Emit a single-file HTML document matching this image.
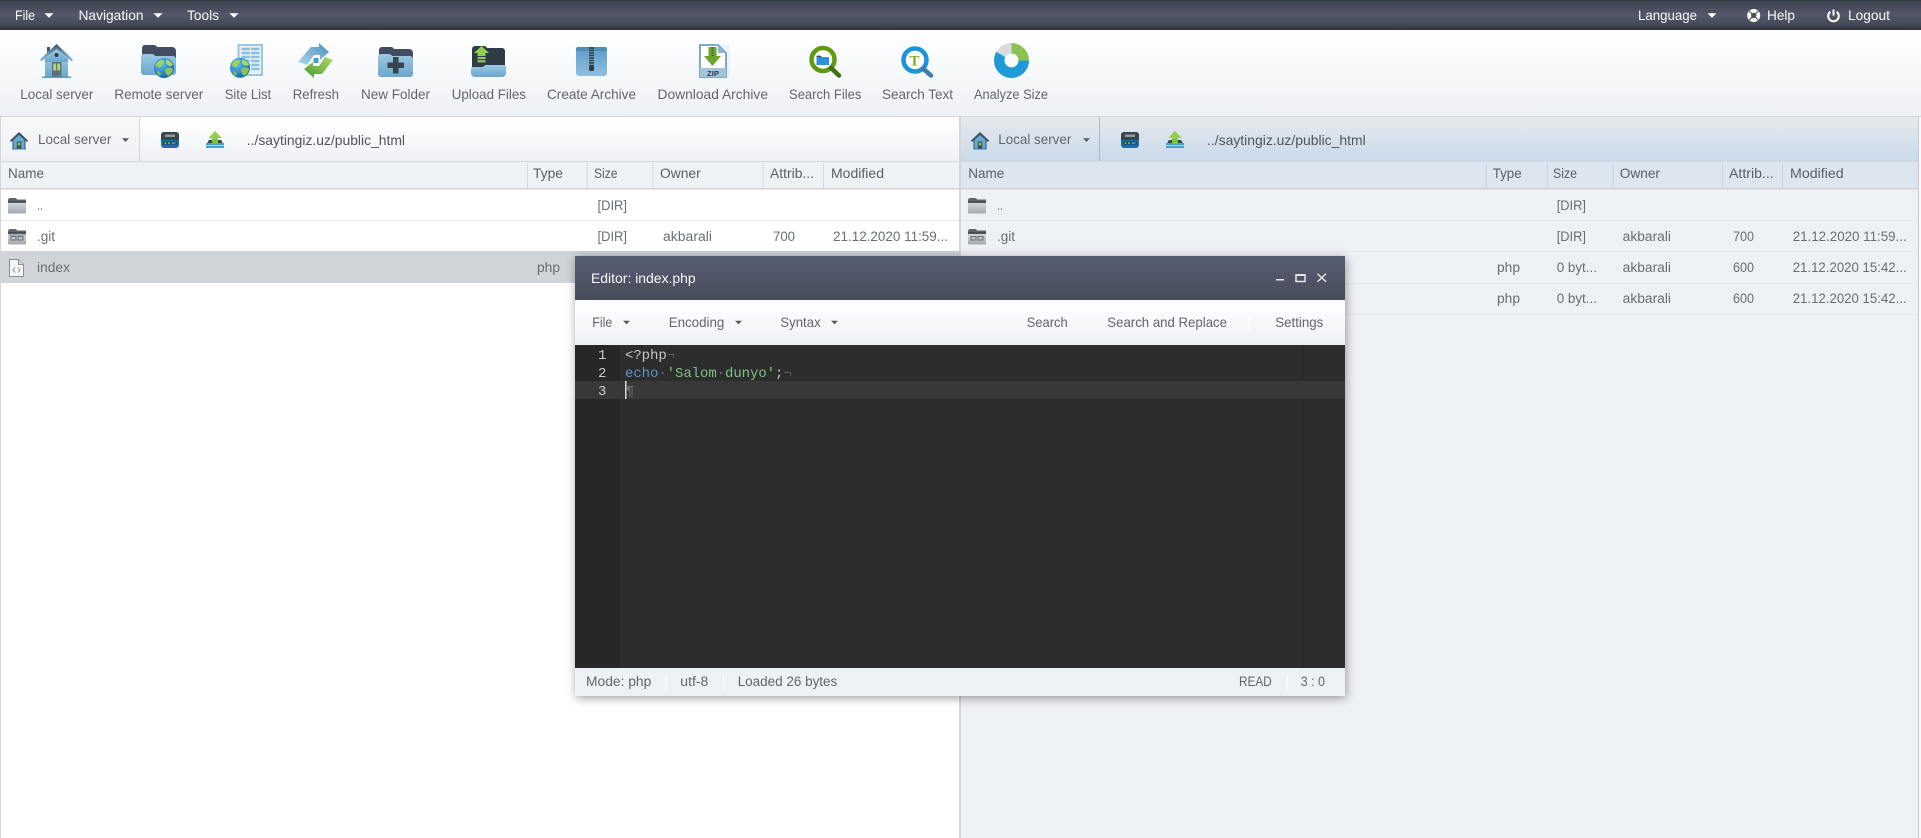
<!DOCTYPE html>
<html lang="en"><head><meta charset="utf-8"><title>File Manager</title>
<style>
html,body{margin:0;padding:0;background:#fff;width:1921px;height:838px;overflow:hidden}
svg{display:block}
text{font-family:"Liberation Sans",sans-serif;font-size:14px;fill:#62666c}
.w{fill:#f6f7f9}
.d{fill:#5a5f66}
.t{font-size:13.5px;fill:#6a6e74}
.p{fill:#50555b}
.s{font-size:13.5px}
.c{font-family:"Liberation Mono",monospace;font-size:14px;letter-spacing:-.07px}
</style></head><body>
<svg xmlns="http://www.w3.org/2000/svg" width="1921" height="838" viewBox="0 0 1921 838">
<defs>
<linearGradient id="top" x1="0" y1="0" x2="0" y2="1"><stop offset="0" stop-color="#3c404e"/><stop offset=".5" stop-color="#545969"/><stop offset=".8" stop-color="#464a58"/><stop offset="1" stop-color="#32343e"/></linearGradient>
<linearGradient id="tb" x1="0" y1="0" x2="0" y2="1"><stop offset="0" stop-color="#fff"/><stop offset="1" stop-color="#eef1f5"/></linearGradient>
<linearGradient id="dd" x1="0" y1="0" x2="0" y2="1"><stop offset="0" stop-color="#f7f8fa"/><stop offset="1" stop-color="#eef1f4"/></linearGradient>
<linearGradient id="rt" x1="0" y1="0" x2="0" y2="1"><stop offset="0" stop-color="#e6e9ed"/><stop offset="1" stop-color="#c8dae9"/></linearGradient>
<linearGradient id="ti" x1="0" y1="0" x2="0" y2="1"><stop offset="0" stop-color="#585f73"/><stop offset="1" stop-color="#474c5a"/></linearGradient>
<linearGradient id="bl" x1="0" y1="0" x2="0" y2="1"><stop offset="0" stop-color="#9cc8e2"/><stop offset="1" stop-color="#6aa6ce"/></linearGradient>
<linearGradient id="bl2" x1="0" y1="0" x2="0" y2="1"><stop offset="0" stop-color="#5b9bc8"/><stop offset="1" stop-color="#8fc0e2"/></linearGradient>
<linearGradient id="roof" x1="0" y1="0" x2="0" y2="1"><stop offset="0" stop-color="#3f4c60"/><stop offset=".45" stop-color="#5f8fae"/><stop offset="1" stop-color="#8cc0dd"/></linearGradient>
<linearGradient id="gf" x1="0" y1="0" x2="0" y2="1"><stop offset="0" stop-color="#d3d6da"/><stop offset="1" stop-color="#a4a8ad"/></linearGradient>
<linearGradient id="ra" x1="0" y1="1" x2="1" y2="0"><stop offset="0" stop-color="#b0d8ec"/><stop offset="1" stop-color="#4a8fc0"/></linearGradient>
<linearGradient id="ga" x1="1" y1="0" x2="0" y2="1"><stop offset="0" stop-color="#b4d86a"/><stop offset="1" stop-color="#459a30"/></linearGradient>
<radialGradient id="gl" cx=".35" cy=".3" r=".8"><stop offset="0" stop-color="#5cc0f5"/><stop offset="1" stop-color="#0a5cb0"/></radialGradient>
<filter id="sh" x="-5%" y="-5%" width="110%" height="110%"><feGaussianBlur stdDeviation="5"/></filter>

<g id="globe"><circle r="10" fill="url(#gl)"/>
<path d="M-8.5-3q3-5.5 7.5-5q2.500 2-.5 4q-1 3.500-3 3.500q-3-.5-4-2.500z" fill="#a0d455"/>
<path d="M2-8.500q5 1 7 5.500q-3 2-4.500.5q-3-1-2.500-6z" fill="#a8d85c"/>
<path d="M1 1q4-2 8-.5q-.5 5-4.500 7.500q-3.500-2-3.500-7z" fill="#8cc84e"/>
<path d="M-7 3q3 0 4 3q-1 2-2 2q-2-2-2-5z" fill="#80bc48"/></g>

<g id="house"><path d="M7 9V3h3v3z" fill="#4a5668"/>
<path d="M5 13H28V33H5z" fill="url(#bl)"/>
<path d="M16.500 0 33 15.500 31.500 17.500 16.500 5 1.500 17.500 0 15.500z" fill="url(#roof)"/>
<path d="M16.500 5 5 15V18H28V15z" fill="url(#bl)"/>
<circle cx="16.500" cy="11" r="2" fill="#2f3a48"/>
<rect x="12" y="18" width="9.500" height="15.500" fill="#646e78"/>
<rect x="13.300" y="19.500" width="2.800" height="7" fill="#b0d480"/><rect x="17.300" y="19.500" width="2.800" height="7" fill="#b0d480"/>
<rect x="2" y="32.500" width="29" height="1.500" fill="#5a9cc2"/></g>

<g id="hsm"><path d="M9 0 18 8.500 17 10 15.500 9V17H2.500V9L1 10 0 8.500z" fill="#3e5268"/>
<path d="M9 3 3.500 8V17H14.500V8z" fill="#66abd2"/>
<rect x="6.800" y="9.500" width="4.500" height="7.500" fill="#3e4a52"/><rect x="7.800" y="10.500" width="2.500" height="3" fill="#8cc84b"/>
<rect x="2" y="16.500" width="14" height="1" fill="#2d80ad"/></g>

<g id="drive"><rect x="0" y="0" width="18" height="16" rx="3" fill="#1f6ea8"/>
<path d="M0 8V3a3 3 0 0 1 3-3H15a3 3 0 0 1 3 3V8z" fill="#38444f"/>
<rect x="4" y="2.500" width="10" height="2.500" fill="#8f9aa3"/>
<rect x="2" y="9.500" width="14" height="3" fill="#153f5e"/>
<rect x="3.500" y="10.300" width="2" height="1.500" fill="#8cc84b"/><rect x="7" y="10.300" width="2" height="1.500" fill="#8cc84b"/><rect x="10.500" y="10.300" width="4" height="1.500" fill="#5ea3cc"/></g>

<g id="upl"><path d="M2 11 Q2 9 4 9H14Q16 9 16 11L18 13H0z" fill="#3a4652"/>
<path d="M0 12H18V17H0z" fill="#4a9ec9"/><path d="M0 14.500H18" stroke="#a9d6ea" stroke-width="1"/>
<path d="M9 0 15.500 7H12V13H6V7H2.500z" fill="#7cc241"/><path d="M9 0 15.500 7H12V8H6V7H2.500z" fill="#8fd04d"/></g>

<g id="gfold"><path d="M0 2.500Q0 0 2.500 0H7Q8.500 0 9 1.500H18V4H0z" fill="#60656b"/><rect y="3.500" width="18" height="1.300" fill="#2f3338"/><path d="M0 5H18V14.500Q18 15.500 17 15.500H1Q0 15.500 0 14.500z" fill="url(#gf)"/></g>
</defs>

<!-- base -->
<rect width="1921" height="838" fill="#fff"/>
<rect width="1921" height="30" fill="url(#top)"/>
<rect width="1921" height="1" fill="#2d3d40"/>
<rect y="30" width="1921" height="86" fill="url(#tb)"/>
<rect y="116" width="1921" height="1" fill="#d4d6d9"/>

<!-- top menu -->
<text class="w" x="15" y="20" textLength="20" lengthAdjust="spacingAndGlyphs">File</text><path d="M44.500 13.200h9l-4.500 4.500z" fill="#fff"/>
<text class="w" x="78.500" y="20" textLength="65" lengthAdjust="spacingAndGlyphs">Navigation</text><path d="M153.500 13.200h9l-4.500 4.500z" fill="#fff"/>
<text class="w" x="187" y="20" textLength="32" lengthAdjust="spacingAndGlyphs">Tools</text><path d="M229.500 13.200h9l-4.500 4.500z" fill="#fff"/>
<text class="w" x="1638" y="20" textLength="59" lengthAdjust="spacingAndGlyphs">Language</text><path d="M1707.500 13.200h9l-4.500 4.500z" fill="#fff"/>
<circle cx="1753.700" cy="15.500" r="6.500" fill="#fff"/>
<path d="M1749.200 11 1758.200 20M1758.200 11 1749.200 20" stroke="#4c5060" stroke-width="1.100"/>
<circle cx="1753.700" cy="15.500" r="2.700" fill="#4c5060"/>
<text class="w" x="1767" y="20" textLength="28" lengthAdjust="spacingAndGlyphs">Help</text>
<path d="M1830.300 11.800a5.300 5.300 0 1 0 6.400 0" fill="none" stroke="#fff" stroke-width="2"/><path d="M1833.500 9.500v6" stroke="#fff" stroke-width="2"/>
<text class="w" x="1848" y="20" textLength="42" lengthAdjust="spacingAndGlyphs">Logout</text>

<!-- main toolbar icons -->
<use href="#house" x="40" y="44"/>
<g transform="translate(141,43)"><path d="M1 5a3 3 0 0 1 3-3H13Q15 2 16 4H31a4 4 0 0 1 4 4V18H1z" fill="#434c60"/>
<path d="M0 14a3 3 0 0 1 3-3H11Q13 11 14 13H32a3 3 0 0 1 3 3V29a3 3 0 0 1-3 3H3a3 3 0 0 1-3-3z" fill="url(#bl)"/></g>
<use href="#globe" x="164" y="68"/>
<g transform="translate(237.500,44)"><rect width="25.500" height="32" fill="#9cc6e2"/><rect x="2" y="2" width="21.500" height="28" fill="#e8f2f9"/>
<path d="M4 5h18M4 9h18M4 13h18M4 17h18M4 21h18M4 25h18" stroke="#8dbfe0" stroke-width="2.400"/><path d="M13 4v23" stroke="#e8f2f9"/></g>
<use href="#globe" x="240" y="67.700"/>
<g transform="translate(298,43)"><path d="M0 19 13 4H21V0L31 9 22 17V12H16L9 22z" fill="url(#ra)"/>
<path d="M35 17 24 31H16V35L6 26 15 19V23H21L27 14z" fill="url(#ga)"/>
<rect x="15.500" y="15" width="5" height="5" fill="#3f9fcc"/></g>
<g transform="translate(378,46)"><path d="M1 4a3 3 0 0 1 3-3H13Q15 1 16 3H31a4 4 0 0 1 4 4V16H1z" fill="#434c60"/>
<path d="M0 11a3 3 0 0 1 3-3H11Q13 8 14 10H32a3 3 0 0 1 3 3V28a3 3 0 0 1-3 3H3a3 3 0 0 1-3-3z" fill="url(#bl)"/>
<path d="M15 11h5.500v5.500H26V22H20.500V27.500H15V22H9.500V16.500H15z" fill="#3a4350"/></g>
<g transform="translate(471,45)"><path d="M1 4a3 3 0 0 1 3-3H13Q15 1 16 3H31a3 3 0 0 1 3 3V26H1z" fill="#2f3b47"/>
<path d="M0 23Q0 22 2 22H11Q13 22 14 20H33Q35 20 35 22V28a4 4 0 0 1-4 4H4a4 4 0 0 1-4-4z" fill="url(#bl)"/>
<path d="M10.500 1 18 8H14.500V11H6.500V8H3z" fill="#8fd04d"/><rect x="6.500" y="12" width="8" height="2.200" fill="#8fc56a"/><rect x="6.500" y="15.200" width="8" height="2.200" fill="#8fc56a"/></g>
<g transform="translate(576,47)"><rect width="31" height="29" rx="3" fill="url(#bl2)"/><rect width="31" height="4" rx="2" fill="#4e8cb8"/>
<path d="M13 1h5M13 3.500h5M13 6h5M13 8.500h5M13 11h5M13 13.500h5M13 16h5M13 18.500h5" stroke="#2f3a44" stroke-width="1.500"/><rect x="13" y="19" width="5" height="5" rx="1.500" fill="#2f3a44"/></g>
<g transform="translate(699,45)"><rect x="-.5" y="0" width="31" height="33" fill="#eaf2f7"/>
<path d="M1 0H19L27 8V32H1z" fill="#fff" stroke="#5a8fb5" stroke-width="1.500"/><path d="M19 0V8H27z" fill="#8db7d3"/>
<path d="M9.500 2h8v9h4.500L13.500 21 5 11H9.500z" fill="#6ea52a"/><path d="M12.500 3h2M12.500 5.500h2M12.500 8h2M12.500 10.500h2" stroke="#3d4a40" stroke-width="1"/>
<rect x="1" y="23" width="26" height="9" fill="#a3c4da"/><text x="8" y="31" style="font-size:7px;font-weight:bold;fill:#2f3b47" textLength="12" lengthAdjust="spacingAndGlyphs">ZIP</text></g>
<g><circle cx="823" cy="59.500" r="11.500" fill="#fff" stroke="#5f9a10" stroke-width="4.500"/><path d="M831 68 839 75.500" stroke="#3f7010" stroke-width="4.500" stroke-linecap="round"/>
<path d="M816.500 56.500q0-1 1-1h3l1 1.500h6.500q1 0 1 1v7h-12.500z" fill="#2f8fdc"/><path d="M816.500 56.500h5" stroke="#2c4a66"/></g>
<g><circle cx="915" cy="60" r="11.500" fill="#fff" stroke="#1b94d8" stroke-width="4.500"/><path d="M923 68.500 931 75.500" stroke="#3d7fa8" stroke-width="4.500" stroke-linecap="round"/>
<text x="909.500" y="65.500" style="font-family:'Liberation Serif',serif;font-size:15px;font-weight:bold;fill:#7ab020">T</text></g>
<g transform="translate(1011.500,60.500)"><path d="M0-17.500A17.500 17.500 0 0 1 17.500 0L7 0A7 7 0 0 0 0-7Z" fill="#8cc152"/>
<path d="M17.500 0A17.500 17.500 0 1 1-15.200-8.700L-6.100-3.500A7 7 0 1 0 7 0Z" fill="#1f9ad6"/>
<path d="M-15.200-8.700A17.500 17.500 0 0 1 0-17.500L0-7A7 7 0 0 0-6.100-3.500Z" fill="#d9dbdc"/></g>

<!-- toolbar labels -->
<g>
<text x="20.300" y="99" textLength="73" lengthAdjust="spacingAndGlyphs">Local server</text>
<text x="114.300" y="99" textLength="89" lengthAdjust="spacingAndGlyphs">Remote server</text>
<text x="224.700" y="99" textLength="46.500" lengthAdjust="spacingAndGlyphs">Site List</text>
<text x="292.700" y="99" textLength="46.300" lengthAdjust="spacingAndGlyphs">Refresh</text>
<text x="361" y="99" textLength="69" lengthAdjust="spacingAndGlyphs">New Folder</text>
<text x="451.700" y="99" textLength="74.300" lengthAdjust="spacingAndGlyphs">Upload Files</text>
<text x="547" y="99" textLength="89" lengthAdjust="spacingAndGlyphs">Create Archive</text>
<text x="657.500" y="99" textLength="110.500" lengthAdjust="spacingAndGlyphs">Download Archive</text>
<text x="789" y="99" textLength="72.400" lengthAdjust="spacingAndGlyphs">Search Files</text>
<text x="882" y="99" textLength="71" lengthAdjust="spacingAndGlyphs">Search Text</text>
<text x="974" y="99" textLength="74" lengthAdjust="spacingAndGlyphs">Analyze Size</text>
</g>

<!-- left pane -->
<rect x="0" y="117" width="959" height="721" fill="#fff"/>
<rect x="0" y="117" width="1" height="721" fill="#d4d6d9"/>
<rect x="1" y="117" width="958" height="45" fill="url(#tb)"/>
<rect x="1" y="117" width="138" height="45" fill="url(#dd)"/>
<rect x="139" y="117" width="1" height="45" fill="#d6d9dc"/>
<rect x="1" y="161" width="958" height="1" fill="#d4d6d9"/>
<rect x="1" y="162" width="958" height="26" fill="#eef2f5"/>
<rect x="1" y="188" width="958" height="1.500" fill="#d2d4d6"/>
<rect x="1" y="220" width="958" height="1" fill="#ececee"/>
<rect x="1" y="251" width="958" height="32" fill="#d0d3d7"/>
<g fill="#d6dade"><rect x="527" y="163" width="1" height="25"/><rect x="586.800" y="163" width="1" height="25"/><rect x="652.500" y="163" width="1" height="25"/><rect x="762.500" y="163" width="1" height="25"/><rect x="823" y="163" width="1" height="25"/></g>
<use href="#hsm" x="10" y="132"/>
<text x="38" y="144" textLength="73.400" lengthAdjust="spacingAndGlyphs">Local server</text>
<path d="M122 138.300h7l-3.500 3.700z" fill="#555b62"/>
<use href="#drive" x="161" y="132"/>
<use href="#upl" x="206" y="131"/>
<text class="p" x="246.800" y="145" textLength="158.200" lengthAdjust="spacingAndGlyphs">../saytingiz.uz/public_html</text>
<text class="d" x="8" y="178" textLength="36" lengthAdjust="spacingAndGlyphs">Name</text>
<text class="d" x="533" y="178" textLength="30" lengthAdjust="spacingAndGlyphs">Type</text>
<text class="d" x="594" y="178" textLength="23.500" lengthAdjust="spacingAndGlyphs">Size</text>
<text class="d" x="660" y="178" textLength="40.700" lengthAdjust="spacingAndGlyphs">Owner</text>
<text class="d" x="770" y="178" textLength="44" lengthAdjust="spacingAndGlyphs">Attrib...</text>
<text class="d" x="831" y="178" textLength="53" lengthAdjust="spacingAndGlyphs">Modified</text>
<use href="#gfold" x="8" y="198"/>
<text class="t" x="37" y="210" textLength="6" lengthAdjust="spacingAndGlyphs">..</text>
<text class="t" x="597.500" y="210" textLength="29.500" lengthAdjust="spacingAndGlyphs">[DIR]</text>
<g><use href="#gfold" x="8" y="229"/><rect x="11" y="236.500" width="5" height="3.500" fill="none" stroke="#6a6e73"/><rect x="18" y="236.500" width="5" height="3.500" fill="none" stroke="#6a6e73"/><path d="M9 235H25" stroke="#6a6e73" stroke-width=".8"/></g>
<text class="t" x="37" y="241" textLength="18" lengthAdjust="spacingAndGlyphs">.git</text>
<text class="t" x="597.500" y="241" textLength="29.500" lengthAdjust="spacingAndGlyphs">[DIR]</text>
<text class="t" x="663" y="241" textLength="49" lengthAdjust="spacingAndGlyphs">akbarali</text>
<text class="t" x="773" y="241" textLength="22" lengthAdjust="spacingAndGlyphs">700</text>
<text class="t" x="833" y="241" textLength="115" lengthAdjust="spacingAndGlyphs">21.12.2020 11:59...</text>
<g transform="translate(9,259)"><path d="M.5.500H9.500L14.500 5.500V17.500H.5z" fill="#f4f5f6" stroke="#8b8f94"/><path d="M9.500.500V5.500H14.500" fill="#d6d8da" stroke="#8b8f94"/><path d="M6 8.500 4 11 6 13.500M9 8.500 11 11 9 13.500" fill="none" stroke="#a2a6ab" stroke-width="1.200"/></g>
<text class="t" x="37" y="272" textLength="33" lengthAdjust="spacingAndGlyphs">index</text>
<text class="t" x="537" y="272" textLength="23" lengthAdjust="spacingAndGlyphs">php</text>

<!-- right pane -->
<rect x="959" y="117" width="2" height="721" fill="#d4d6d9"/>
<rect x="961" y="117" width="957" height="721" fill="#edf0f5"/>
<rect x="961" y="117" width="957" height="44.500" fill="url(#rt)"/>
<rect x="1099" y="117" width="1" height="44.500" fill="#a9b9c5"/>
<rect x="961" y="161" width="957" height="1" fill="#d6d9dc"/>
<rect x="961" y="162" width="957" height="26" fill="#dde6ef"/>
<rect x="961" y="188" width="957" height="1.500" fill="#d2d4d6"/>
<rect x="1918" y="117" width="1" height="721" fill="#c8cacc"/>
<rect x="1919" y="117" width="2" height="721" fill="#fafafb"/>
<g fill="#e7eaef"><rect x="961" y="220" width="957" height="1"/><rect x="961" y="251" width="957" height="1"/><rect x="961" y="283" width="957" height="1"/><rect x="961" y="314" width="957" height="1"/></g>
<g fill="#c9d3dc"><rect x="1485.700" y="163" width="1" height="25"/><rect x="1546.700" y="163" width="1" height="25"/><rect x="1612.700" y="163" width="1" height="25"/><rect x="1722" y="163" width="1" height="25"/><rect x="1782" y="163" width="1" height="25"/></g>
<use href="#hsm" x="971" y="132"/>
<text x="998.300" y="144" textLength="73" lengthAdjust="spacingAndGlyphs">Local server</text>
<path d="M1083 138.300h7l-3.500 3.700z" fill="#555b62"/>
<use href="#drive" x="1121" y="132"/>
<use href="#upl" x="1166" y="131"/>
<text class="p" x="1207" y="145" textLength="158.700" lengthAdjust="spacingAndGlyphs">../saytingiz.uz/public_html</text>
<text class="d" x="968.300" y="178" textLength="36" lengthAdjust="spacingAndGlyphs">Name</text>
<text class="d" x="1492.700" y="178" textLength="29" lengthAdjust="spacingAndGlyphs">Type</text>
<text class="d" x="1553" y="178" textLength="24" lengthAdjust="spacingAndGlyphs">Size</text>
<text class="d" x="1619.700" y="178" textLength="40.300" lengthAdjust="spacingAndGlyphs">Owner</text>
<text class="d" x="1729" y="178" textLength="44.700" lengthAdjust="spacingAndGlyphs">Attrib...</text>
<text class="d" x="1790" y="178" textLength="53.700" lengthAdjust="spacingAndGlyphs">Modified</text>
<use href="#gfold" x="968" y="198"/>
<text class="t" x="997" y="210" textLength="6" lengthAdjust="spacingAndGlyphs">..</text>
<text class="t" x="1556.700" y="210" textLength="29.300" lengthAdjust="spacingAndGlyphs">[DIR]</text>
<g><use href="#gfold" x="968" y="229"/><rect x="971" y="236.500" width="5" height="3.500" fill="none" stroke="#6a6e73"/><rect x="978" y="236.500" width="5" height="3.500" fill="none" stroke="#6a6e73"/></g>
<text class="t" x="997" y="241" textLength="18" lengthAdjust="spacingAndGlyphs">.git</text>
<text class="t" x="1556.700" y="241" textLength="29.300" lengthAdjust="spacingAndGlyphs">[DIR]</text>
<text class="t" x="1622.700" y="241" textLength="48.300" lengthAdjust="spacingAndGlyphs">akbarali</text>
<text class="t" x="1733" y="241" textLength="21" lengthAdjust="spacingAndGlyphs">700</text>
<text class="t" x="1792.700" y="241" textLength="114" lengthAdjust="spacingAndGlyphs">21.12.2020 11:59...</text>
<text class="t" x="1497" y="272" textLength="23" lengthAdjust="spacingAndGlyphs">php</text>
<text class="t" x="1556.700" y="272" textLength="40.300" lengthAdjust="spacingAndGlyphs">0 byt...</text>
<text class="t" x="1622.700" y="272" textLength="48.300" lengthAdjust="spacingAndGlyphs">akbarali</text>
<text class="t" x="1733" y="272" textLength="21" lengthAdjust="spacingAndGlyphs">600</text>
<text class="t" x="1792.700" y="272" textLength="114" lengthAdjust="spacingAndGlyphs">21.12.2020 15:42...</text>
<text class="t" x="1497" y="303" textLength="23" lengthAdjust="spacingAndGlyphs">php</text>
<text class="t" x="1556.700" y="303" textLength="40.300" lengthAdjust="spacingAndGlyphs">0 byt...</text>
<text class="t" x="1622.700" y="303" textLength="48.300" lengthAdjust="spacingAndGlyphs">akbarali</text>
<text class="t" x="1733" y="303" textLength="21" lengthAdjust="spacingAndGlyphs">600</text>
<text class="t" x="1792.700" y="303" textLength="114" lengthAdjust="spacingAndGlyphs">21.12.2020 15:42...</text>

<!-- editor window -->
<rect x="576" y="258" width="770" height="440" fill="#000" opacity=".38" filter="url(#sh)"/>
<rect x="575" y="256" width="770" height="44" fill="url(#ti)"/>
<text class="w" x="591" y="283" textLength="104.700" lengthAdjust="spacingAndGlyphs">Editor: index.php</text>
<rect x="1276" y="279" width="8" height="1.500" fill="#e6e7ea"/>
<rect x="1296" y="275" width="9" height="6.500" fill="none" stroke="#e6e7ea" stroke-width="1.500"/><rect x="1295.500" y="274" width="10" height="2" fill="#e6e7ea"/>
<path d="M1317.500 273.800 1326 281.800M1326 273.800 1317.500 281.800" stroke="#e6e7ea" stroke-width="1.400"/>
<rect x="575" y="300" width="770" height="45" fill="url(#tb)"/>
<text x="592.300" y="327" textLength="20" lengthAdjust="spacingAndGlyphs">File</text><path d="M623 320.800h7l-3.500 3.500z" fill="#555a60"/>
<text x="668.700" y="327" textLength="55.600" lengthAdjust="spacingAndGlyphs">Encoding</text><path d="M735 320.800h7l-3.500 3.500z" fill="#555a60"/>
<text x="780.300" y="327" textLength="40.400" lengthAdjust="spacingAndGlyphs">Syntax</text><path d="M831 320.800h7l-3.500 3.500z" fill="#555a60"/>
<text x="1026.700" y="327" textLength="41" lengthAdjust="spacingAndGlyphs">Search</text>
<text x="1107.300" y="327" textLength="119.700" lengthAdjust="spacingAndGlyphs">Search and Replace</text>
<rect x="1248" y="315" width="1" height="15" fill="#fff"/>
<text x="1275.300" y="327" textLength="48" lengthAdjust="spacingAndGlyphs">Settings</text>

<rect x="575" y="345" width="770" height="323" fill="#2d2d2d"/>
<rect x="575" y="345" width="45" height="323" fill="#272727"/>
<rect x="575" y="381" width="770" height="18" fill="#383838"/>
<rect x="1302.500" y="345" width="1" height="323" fill="#222"/>
<rect x="1302.500" y="381" width="1" height="18" fill="#383838"/>
<text class="c" x="598" y="359" style="fill:#c8c8c8">1</text>
<text class="c" x="598" y="377" style="fill:#c8c8c8">2</text>
<text class="c" x="598" y="395" style="fill:#c8c8c8">3</text>
<text class="c" x="625" y="359"><tspan style="fill:#c5c8c6">&lt;?php</tspan><tspan style="fill:#5c5c5c">¬</tspan></text>
<text class="c" x="625" y="377"><tspan style="fill:#5f93c9">echo</tspan><tspan style="fill:#707070">·</tspan><tspan style="fill:#7fbf87">'Salom</tspan><tspan style="fill:#707070">·</tspan><tspan style="fill:#7fbf87">dunyo'</tspan><tspan style="fill:#c5c8c6">;</tspan><tspan style="fill:#5c5c5c">¬</tspan></text>
<text class="c" x="626" y="395" style="fill:#6e6e6e">¶</text>
<rect x="625" y="381" width="1.500" height="18" fill="#d8d8d8"/>

<rect x="575" y="668" width="770" height="28" fill="#edf0f4"/>
<text class="s" x="586" y="686" textLength="65.300" lengthAdjust="spacingAndGlyphs">Mode: php</text>
<rect x="665.500" y="675" width="1" height="16" fill="#fff"/>
<text class="s" x="680.300" y="686" textLength="28" lengthAdjust="spacingAndGlyphs">utf-8</text>
<rect x="723" y="675" width="1" height="16" fill="#fff"/>
<text class="s" x="737.700" y="686" textLength="99.600" lengthAdjust="spacingAndGlyphs">Loaded 26 bytes</text>
<text class="s" x="1239" y="686" textLength="32.700" lengthAdjust="spacingAndGlyphs">READ</text>
<rect x="1286.500" y="675" width="1" height="16" fill="#fff"/>
<text class="s" x="1300.700" y="686" textLength="24.300" lengthAdjust="spacingAndGlyphs">3 : 0</text>
</svg>
</body></html>
